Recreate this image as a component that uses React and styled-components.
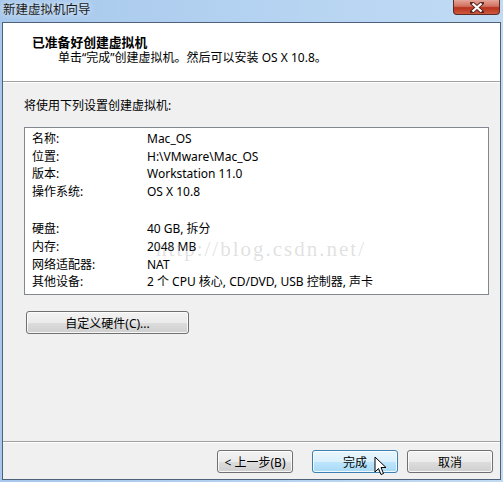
import React from 'react';
import styled, { createGlobalStyle } from 'styled-components';

const GlobalStyle = createGlobalStyle`
  body {
    margin: 0;
    font-family: "Segoe UI", "Noto Sans", "Noto Sans CJK SC", sans-serif;
    font-size: 12px;
    color: #000;
  }
`;

const Window = styled.div`
  width: 503px;
  height: 482px;
  display: flex;
  flex-direction: column;
  background: linear-gradient(90deg, #a7c8ec 0%, #b4d2f1 50%, #c1dbf4 100%);
  box-sizing: border-box;
`;

const TitleBar = styled.div`
  height: 22px;
  display: flex;
  align-items: flex-start;
  justify-content: space-between;
  padding-left: 3px;
  padding-right: 3px;
`;

const TitleText = styled.div`
  font-size: 12.5px;
  line-height: 20px;
  color: #1b1b1b;
  text-shadow: 0 0 6px rgba(255, 255, 255, 0.9);
`;

const CloseButton = styled.div`
  width: 45px;
  height: 14px;
  border: 1px solid #5c2b25;
  border-top: none;
  border-radius: 0 0 4px 4px;
  background: linear-gradient(#e5a59a 0%, #d2705f 45%, #b8321e 55%, #cf5a3e 100%);
  display: flex;
  align-items: center;
  justify-content: center;
`;

const Client = styled.div`
  flex: 1;
  margin: 0 2px 2px 2px;
  border: 1px solid #4d6178;
  display: flex;
  flex-direction: column;
  background: #f0f0f0;
`;

const Header = styled.div`
  height: 59px;
  background: #fff;
  border-bottom: 1px solid #a0a0a0;
  box-shadow: 0 1px 0 #fff;
  padding: 11px 0 0 29px;
  box-sizing: border-box;
`;

const HeaderTitle = styled.div`
  font-weight: bold;
  font-size: 12.8px;
  line-height: 16px;
`;

const HeaderSub = styled.div`
  line-height: 15px;
  padding-left: 26px;
`;

const Body = styled.div`
  flex: 1;
  padding: 16px 0 0 21px;
`;

const Intro = styled.div`
  line-height: 16px;
`;

const ListBox = styled.div`
  position: relative;
  margin-top: 13px;
  width: 465px;
  height: 168px;
  box-sizing: border-box;
  border: 1px solid #828790;
  background: #fff;
  padding: 2px 0 0 7px;
  overflow: hidden;
`;

const Row = styled.div`
  display: grid;
  grid-template-columns: 115px 1fr;
  line-height: 17.6px;
  white-space: nowrap;
`;

const Spacer = styled.div`
  height: 20px;
`;

const Watermark = styled.div`
  position: absolute;
  left: 131px;
  top: 109px;
  font-family: "Liberation Serif", serif;
  font-size: 21px;
  letter-spacing: 2px;
  color: rgba(150, 150, 150, 0.3);
  pointer-events: none;
`;

const Button = styled.button`
  font-family: inherit;
  font-size: 12px;
  color: #000;
  height: 23px;
  width: ${({ $w }) => $w}px;
  padding: 0;
  border: 1px solid ${({ $active }) => ($active ? '#3c7fb1' : '#707070')};
  border-radius: 3px;
  box-shadow: inset 0 0 0 1px rgba(255, 255, 255, 0.8);
  background: ${({ $active }) =>
    $active
      ? 'linear-gradient(#eaf6fd 0%, #d9f0fc 50%, #bee6fd 51%, #a7d9f5 100%)'
      : 'linear-gradient(#f2f2f2 0%, #ebebeb 50%, #dddddd 51%, #cfcfcf 100%)'};
  position: relative;
`;

const CustomButton = styled(Button)`
  margin-top: 16px;
  margin-left: 2px;
`;

const Footer = styled.div`
  border-top: 1px solid #a0a0a0;
  box-shadow: inset 0 1px 0 #fff;
  height: 38px;
  display: flex;
  justify-content: flex-end;
  align-items: flex-start;
  padding: 8px 7px 0 0;
  box-sizing: border-box;
`;

const Gap = styled.div`
  width: ${({ $w }) => $w}px;
`;

const Cursor = styled.svg`
  position: absolute;
  left: 61px;
  top: 5px;
`;

const settingsTop = [
  ['名称:', 'Mac_OS'],
  ['位置:', 'H:\\VMware\\Mac_OS'],
  ['版本:', 'Workstation 11.0'],
  ['操作系统:', 'OS X 10.8'],
];

const settingsBottom = [
  ['硬盘:', '40 GB, 拆分'],
  ['内存:', '2048 MB'],
  ['网络适配器:', 'NAT'],
  ['其他设备:', '2 个 CPU 核心, CD/DVD, USB 控制器, 声卡'],
];

const App = () => {
  return (
    <>
      <GlobalStyle />
      <Window>
        <TitleBar>
          <TitleText>新建虚拟机向导</TitleText>
          <CloseButton>
            <svg width="14" height="11" viewBox="0 0 14 11">
              <path d="M2 1 L12 10 M12 1 L2 10" stroke="#5a2a22" strokeWidth="4" strokeLinecap="square" />
              <path d="M2.5 1.5 L11.5 9.5 M11.5 1.5 L2.5 9.5" stroke="#fff" strokeWidth="2.2" />
            </svg>
          </CloseButton>
        </TitleBar>
        <Client>
          <Header>
            <HeaderTitle>已准备好创建虚拟机</HeaderTitle>
            <HeaderSub>单击“完成”创建虚拟机。然后可以安装 OS X 10.8。</HeaderSub>
          </Header>
          <Body>
            <Intro>将使用下列设置创建虚拟机:</Intro>
            <ListBox>
              {settingsTop.map(([k, v]) => (
                <Row key={k}>
                  <span>{k}</span>
                  <span>{v}</span>
                </Row>
              ))}
              <Spacer />
              {settingsBottom.map(([k, v]) => (
                <Row key={k}>
                  <span>{k}</span>
                  <span>{v}</span>
                </Row>
              ))}
              <Watermark>http://blog.csdn.net/</Watermark>
            </ListBox>
            <CustomButton $w={163}>自定义硬件(C)...</CustomButton>
          </Body>
          <Footer>
            <Button $w={76}>&lt; 上一步(B)</Button>
            <Gap $w={19} />
            <Button $w={86} $active>
              完成
              <Cursor width="13" height="20" viewBox="0 0 13 20">
                <path
                  d="M1 1 L1 16 L4.5 12.5 L7 18.5 L9.5 17.5 L7 11.5 L12 11.5 Z"
                  fill="#fff"
                  stroke="#000"
                  strokeWidth="1"
                  strokeLinejoin="miter"
                />
              </Cursor>
            </Button>
            <Gap $w={9} />
            <Button $w={86}>取消</Button>
          </Footer>
        </Client>
      </Window>
    </>
  );
};

export default App;
